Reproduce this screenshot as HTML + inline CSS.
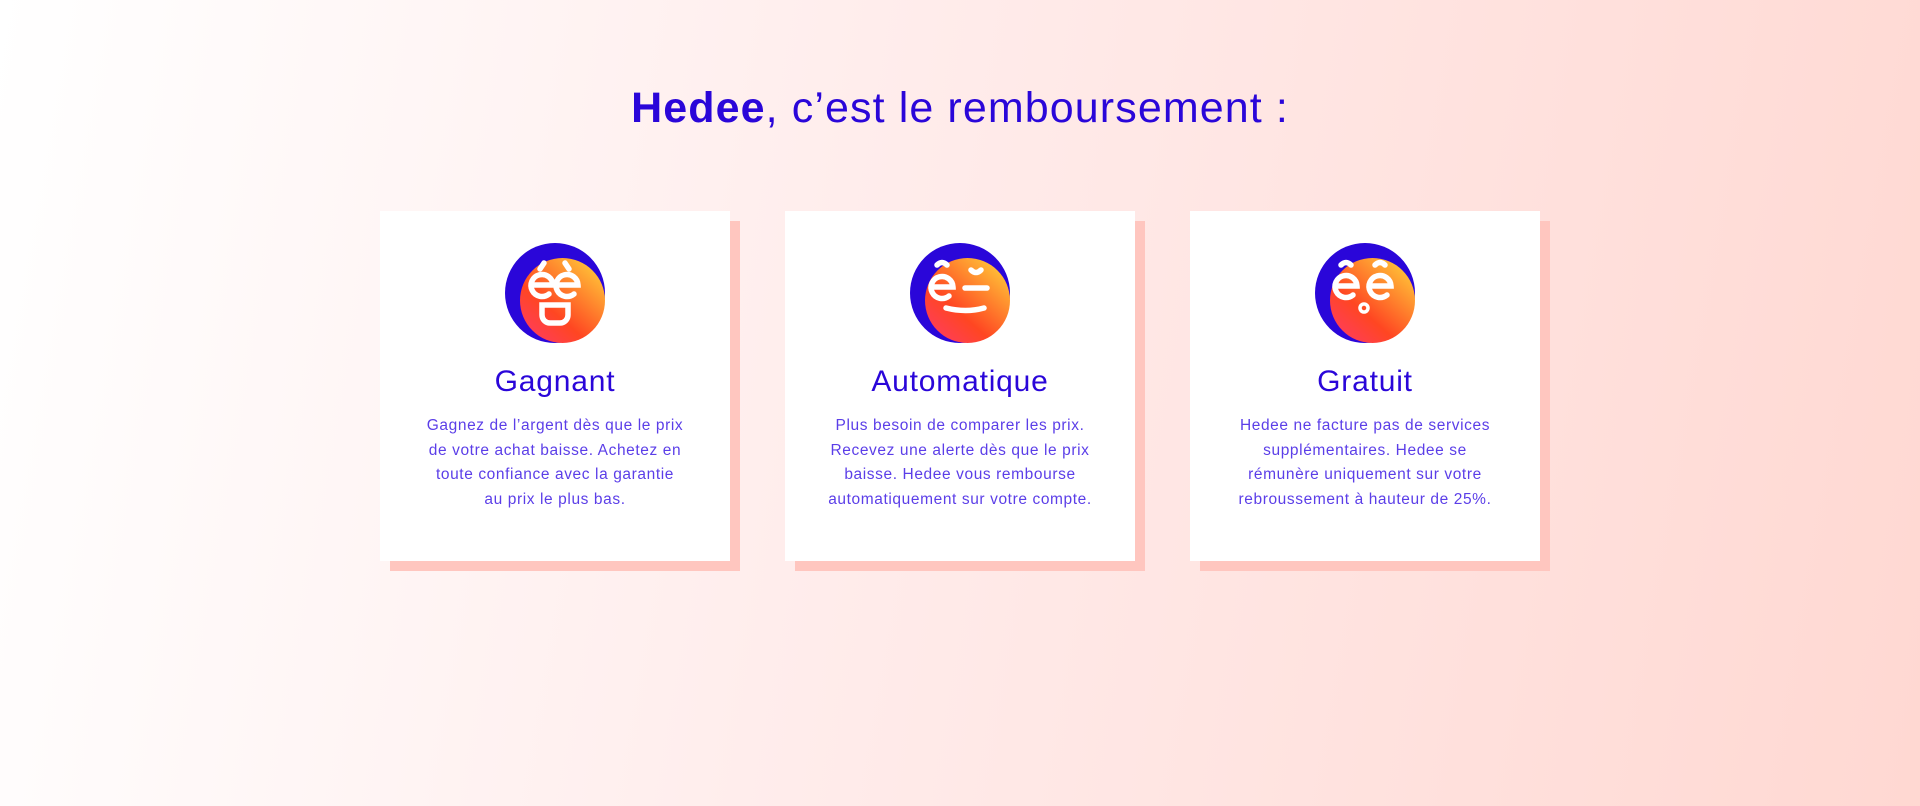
<!DOCTYPE html>
<html><head><meta charset="utf-8"><style>
html,body{margin:0;padding:0}
body{width:1920px;height:806px;overflow:hidden;background:linear-gradient(100deg,#ffffff 0%,#ffeceb 45%,#ffd8d2 100%);font-family:"Liberation Sans",sans-serif;position:relative}
h1{position:absolute;top:78px;left:0;width:1920px;text-align:center;margin:0;font-weight:400;font-size:43px;color:#2a06d9;line-height:60px;letter-spacing:1.1px}
h1 b{font-weight:700}
.card{position:absolute;top:211px;width:350px;height:350px;background:#fff;box-shadow:10px 10px 0 #ffc6bf;text-align:center}
.card svg{position:absolute;left:125px;top:32px}
.card h2{position:absolute;top:151px;left:0;width:100%;margin:0;font-weight:400;font-size:30px;color:#2a06d9;line-height:40px;letter-spacing:0.8px}
.card p{position:absolute;top:203px;left:40px;width:270px;margin:0;font-size:15.5px;line-height:24.5px;color:#5b3ee8;letter-spacing:0.6px}
</style></head><body>
<h1><b>Hedee</b>, c’est le remboursement :</h1>
<svg width="0" height="0" style="position:absolute"><defs>
<linearGradient id="g" x1="0.15" y1="0.95" x2="0.9" y2="0.1"><stop offset="0" stop-color="#ff3d5a"/><stop offset="0.35" stop-color="#ff4622"/><stop offset="1" stop-color="#ffc438"/></linearGradient></defs></svg>

<div class="card" style="left:380px">
<svg width="100" height="100" viewBox="0 0 100 100"><circle cx="50" cy="50" r="50" fill="#2a06d9"/><circle cx="57.5" cy="57.5" r="42.5" fill="url(#g)"/>
<g fill="none" stroke="#fff" stroke-width="5.5" stroke-linecap="round">
<path d="M26 42h22a11 11 0 1 0-4 9"/><path d="M51 42h22a11 11 0 1 0-4 9"/>
<path d="M35 26l4-6"/><path d="M60 20l4 6"/>
<path d="M37 62h26v10a8 8 0 0 1-8 8h-10a8 8 0 0 1-8-8z"/></g></svg>
<h2>Gagnant</h2>
<p>Gagnez de l’argent dès que le prix de votre achat baisse. Achetez en toute confiance avec la garantie<br>au prix le plus bas.</p>
</div>

<div class="card" style="left:785px">
<svg width="100" height="100" viewBox="0 0 100 100"><circle cx="50" cy="50" r="50" fill="#2a06d9"/><circle cx="57.5" cy="57.5" r="42.5" fill="url(#g)"/>
<g fill="none" stroke="#fff" stroke-width="5.5" stroke-linecap="round">
<path d="M21 44h22a11 11 0 1 0-4 9"/><path d="M27 22q5-5 10 0"/>
<path d="M55 45h22"/><path d="M61 27q5 5 10 0"/>
<path d="M36 65q20 5 38 0"/></g></svg>
<h2>Automatique</h2>
<p>Plus besoin de comparer les prix. Recevez une alerte dès que le prix baisse. Hedee vous rembourse automatiquement sur votre compte.</p>
</div>

<div class="card" style="left:1190px">
<svg width="100" height="100" viewBox="0 0 100 100"><circle cx="50" cy="50" r="50" fill="#2a06d9"/><circle cx="57.5" cy="57.5" r="42.5" fill="url(#g)"/>
<g fill="none" stroke="#fff" stroke-width="5.5" stroke-linecap="round">
<path d="M20 43h22a11 11 0 1 0-4 9"/><path d="M26 22q5-5 10 0"/>
<path d="M54 43h22a11 11 0 1 0-4 9"/><path d="M60 22q5-5 10 0"/>
<circle cx="49" cy="65" r="4" stroke-width="3.5"/></g></svg>
<h2>Gratuit</h2>
<p>Hedee ne facture pas de services supplémentaires. Hedee se rémunère uniquement sur votre rebroussement à hauteur de 25%.</p>
</div>
</body></html>
